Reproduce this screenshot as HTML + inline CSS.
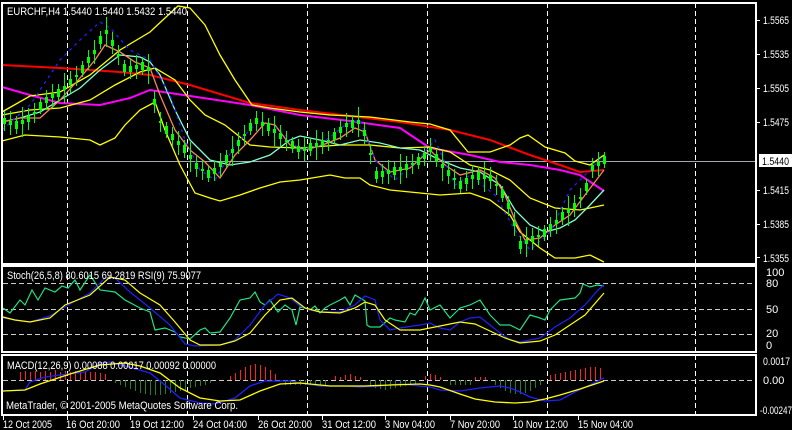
<!DOCTYPE html>
<html><head><meta charset="utf-8"><style>
html,body{margin:0;padding:0;background:#000;width:792px;height:430px;overflow:hidden}
svg{display:block}
text{font-family:"Liberation Sans",sans-serif;font-size:11px;fill:#fff}
</style></head><body>
<svg width="792" height="430" viewBox="0 0 792 430" xmlns="http://www.w3.org/2000/svg">
<rect width="792" height="430" fill="#000"/>
<g stroke="#fff" stroke-dasharray="5,3" stroke-width="1">
<line x1="67.5" y1="3" x2="67.5" y2="415"/><line x1="187.5" y1="3" x2="187.5" y2="415"/><line x1="307.5" y1="3" x2="307.5" y2="415"/><line x1="427.5" y1="3" x2="427.5" y2="415"/><line x1="547.5" y1="3" x2="547.5" y2="415"/><line x1="695.5" y1="3" x2="695.5" y2="415"/>
</g>
<line x1="3" y1="161.5" x2="756" y2="161.5" stroke="#a0a8b0"/>
<g stroke="#ccc" stroke-dasharray="5,3">
<line x1="3" y1="283.5" x2="756" y2="283.5"/><line x1="3" y1="309.5" x2="756" y2="309.5"/><line x1="3" y1="334.5" x2="756" y2="334.5"/><line x1="3" y1="380.5" x2="756" y2="380.5"/>
</g>
<g fill="none" stroke-width="1">
<path stroke="#ff2020" d="M20.5 380V372M25.5 380V371M30.5 380V372M35.5 380V371M40.5 380V372M45.5 380V371M50.5 380V372M55.5 380V370M60.5 380V372M65.5 380V371M70.5 380V372M75.5 380V371M80.5 380V372M85.5 380V371M90.5 380V372M95.5 380V372M100.5 380V373M105.5 380V374M230.5 380V376M235.5 380V373M240.5 380V370M245.5 380V367M250.5 380V365M255.5 380V364M260.5 380V365M265.5 380V367M270.5 380V370M275.5 380V374M335.5 380V376M340.5 380V377M345.5 380V375M350.5 380V374M355.5 380V376M360.5 380V377M425.5 380V376M430.5 380V374M435.5 380V375M440.5 380V377M475.5 380V377M480.5 380V377M485.5 380V377M550.5 380V375M555.5 380V374M560.5 380V373M565.5 380V372M570.5 380V371M575.5 380V370M580.5 380V369M585.5 380V368M590.5 380V367M595.5 380V367M600.5 380V368"/>
<path stroke="#208020" d="M115.5 380V383M120.5 380V385M125.5 380V387M130.5 380V389M135.5 380V391M140.5 380V393M145.5 380V394M150.5 380V395M155.5 380V395M160.5 380V395M165.5 380V394M170.5 380V393M175.5 380V392M180.5 380V391M185.5 380V390M190.5 380V388M195.5 380V387M200.5 380V386M205.5 380V385M210.5 380V383M285.5 380V385M290.5 380V385M295.5 380V385M300.5 380V385M305.5 380V385M310.5 380V385M315.5 380V385M320.5 380V385M325.5 380V385M370.5 380V386M375.5 380V388M380.5 380V389M385.5 380V390M390.5 380V389M395.5 380V388M400.5 380V387M405.5 380V386M410.5 380V385M415.5 380V384M450.5 380V385M455.5 380V385M460.5 380V385M465.5 380V385M470.5 380V385M495.5 380V385M500.5 380V388M505.5 380V391M510.5 380V393M515.5 380V394M520.5 380V394M525.5 380V393M530.5 380V391M535.5 380V388M540.5 380V385"/>
</g>
<g fill="none" stroke-width="1.3">
<polyline stroke="#ff0000" stroke-width="2" points="2,65 60,68 120,72 150,75 190,85 250,103 300,110 350,116 400,122 450,130 490,140 530,155 560,165 580,172 604,170"/>
<polyline stroke="#ff00ff" stroke-width="2" points="2,87 30,95 60,103 100,105 130,98 150,90 190,96 250,105 300,115 350,121 400,128 430,148 470,155 500,162 530,165 560,170 580,175 604,191"/>
<polyline stroke="#ffff00" points="2,112 30,96 60,92 90,75 120,50 150,32 165,18 178,6 190,8 205,25 220,55 235,80 252,105 270,108 300,112 330,115 370,117 410,122 430,124 450,130 468,152 490,152 510,145 520,138 528,135 545,147 565,153 575,161 590,165 604,155"/>
<polyline stroke="#ffff00" points="2,141 25,135 60,137 90,140 100,145 115,138 125,125 140,110 155,102 165,130 180,165 195,193 210,198 220,201 240,195 260,188 280,182 300,180 330,175 345,178 360,178 370,185 390,190 420,193 440,195 470,193 490,200 510,215 520,232 540,248 555,258 575,258 590,255 604,262"/>
<polyline stroke="#ffff00" points="2,115 30,110 60,108 90,100 115,85 140,72 155,68 175,80 190,100 205,115 225,125 250,145 270,147 300,148 340,145 370,145 400,148 430,147 450,152 470,165 490,170 510,180 530,198 555,208 580,210 590,208 604,205"/>
<polyline stroke="#80ffd0" points="2,122 20,118 40,112 60,100 80,88 100,70 120,55 140,57 150,62 160,75 175,110 190,140 210,160 230,165 250,162 270,155 290,140 300,136 320,140 340,145 360,140 380,143 400,148 420,150 440,160 460,168 480,172 500,185 515,210 530,225 545,232 560,228 575,220 590,205 604,190"/>
<polyline stroke="#ff8060" points="2,122 20,118 40,118 60,100 80,78 95,60 105,45 120,52 135,62 150,68 160,95 175,130 190,150 205,162 220,178 235,155 250,140 265,123 275,125 290,145 305,150 320,146 340,138 355,128 365,132 375,160 390,172 410,168 430,150 445,165 460,175 480,170 495,178 505,195 515,220 525,240 540,238 555,225 570,215 585,195 604,170"/>
<polyline stroke="#2020ff" stroke-dasharray="3,4" points="2,130 30,105 60,60 80,40 100,22 110,28 130,50 150,60 170,95 185,140 200,170 215,180 235,145 260,120 280,130 300,150 320,145 345,125 360,120 375,160 395,180 420,158 435,140 455,185 470,175 495,195 515,230 530,250 550,232 570,190 590,170 604,155"/>
</g>
<path fill="none" stroke="#00ff00" stroke-width="1" d="M4.5 111V131M10.5 111V135M16.5 116V134M22.5 107V137M28.5 108V130M34.5 103V123M40.5 98V114M46.5 90V110M52.5 84V108M58.5 84V102M64.5 73V103M70.5 71V93M76.5 66V86M82.5 61V77M88.5 50V70M94.5 40V64M100.5 31V49M106.5 17V47M112.5 32V54M118.5 45V65M124.5 60V76M130.5 59V79M136.5 55V79M142.5 57V75M148.5 54V84M154.5 91V113M160.5 112V132M166.5 122V138M172.5 127V147M178.5 131V155M184.5 140V158M190.5 142V172M196.5 155V177M202.5 160V180M208.5 166V182M214.5 161V181M220.5 153V177M226.5 150V168M232.5 136V166M238.5 132V154M244.5 125V145M250.5 119V135M256.5 111V131M262.5 112V136M268.5 118V136M274.5 116V146M280.5 125V147M286.5 131V151M292.5 137V153M298.5 139V159M304.5 137V161M310.5 138V156M316.5 130V160M322.5 132V154M328.5 131V151M334.5 128V144M340.5 120V140M346.5 113V137M352.5 115V133M358.5 107V137M364.5 122V144M370.5 144V164M376.5 167V183M382.5 164V184M388.5 160V184M394.5 162V180M400.5 154V184M406.5 156V178M412.5 154V174M418.5 153V169M424.5 146V166M430.5 138V162M436.5 149V167M442.5 151V181M448.5 162V184M454.5 169V189M460.5 177V193M466.5 171V191M472.5 165V189M478.5 167V185M484.5 162V192M490.5 167V189M496.5 175V195M502.5 186V202M508.5 196V216M514.5 212V236M520.5 236V254M526.5 227V257M532.5 228V250M538.5 226V246M544.5 225V241M550.5 217V237M556.5 210V234M562.5 207V225M568.5 196V226M574.5 195V217M580.5 188V208M586.5 179V195M592.5 158V178M598.5 152V176M604.5 152V168"/>
<path fill="none" stroke="#00ff00" stroke-width="3" d="M4.5 118V124M10.5 121V125M16.5 121V129M22.5 120V124M28.5 116V122M34.5 112V114M40.5 102V110M46.5 97V103M52.5 94V98M58.5 89V97M64.5 86V90M70.5 79V85M76.5 75V77M82.5 65V73M88.5 57V63M94.5 50V54M100.5 36V44M106.5 30V34M112.5 40V46M118.5 54V56M124.5 64V72M130.5 66V72M136.5 65V69M142.5 62V70M148.5 67V71M154.5 99V105M160.5 121V123M166.5 126V134M172.5 134V140M178.5 141V145M184.5 145V153M190.5 155V159M196.5 163V169M202.5 169V171M208.5 170V178M214.5 168V174M220.5 163V167M226.5 155V163M232.5 149V153M238.5 140V146M244.5 134V136M250.5 123V131M256.5 118V124M262.5 122V126M268.5 123V131M274.5 129V133M280.5 133V139M286.5 140V142M292.5 141V149M298.5 146V152M304.5 147V151M310.5 143V151M316.5 143V147M322.5 140V146M328.5 140V142M334.5 132V140M340.5 127V133M346.5 123V127M352.5 120V128M358.5 120V124M364.5 130V136M370.5 153V155M376.5 171V179M382.5 171V177M388.5 170V174M394.5 167V175M400.5 167V171M406.5 164V170M412.5 163V165M418.5 157V165M424.5 153V159M430.5 148V152M436.5 154V162M442.5 164V168M448.5 170V176M454.5 178V180M460.5 181V189M466.5 178V184M472.5 175V179M478.5 172V180M484.5 175V179M490.5 175V181M496.5 184V186M502.5 190V198M508.5 203V209M514.5 222V226M520.5 241V249M526.5 240V244M532.5 236V242M538.5 235V237M544.5 229V237M550.5 224V230M556.5 220V224M562.5 212V220M568.5 209V213M574.5 203V209M580.5 197V199M586.5 183V191M592.5 165V171M598.5 162V166M604.5 156V164"/>
<g fill="none" stroke-width="1.2">
<polyline stroke="#20e080" points="3,308 10,313 20,300 25,305 32,290 38,300 45,288 55,292 62,286 68,288 75,280 80,290 90,275 100,290 115,292 125,300 140,308 150,312 155,330 165,328 175,332 180,337 190,339 200,330 205,328 210,333 220,332 230,318 240,300 250,298 255,292 260,302 265,305 270,300 278,312 285,305 292,310 296,325 300,307 305,308 310,310 315,306 320,313 325,308 330,305 340,300 345,297 350,305 355,295 365,301 367,325 370,327 380,327 390,318 395,320 405,322 410,313 415,315 420,308 425,298 430,310 440,305 450,318 460,308 470,305 480,300 490,315 500,325 510,325 520,330 530,315 540,318 545,320 550,310 560,300 575,298 580,293 583,284 590,287 597,285 604,286"/>
<polyline stroke="#2020ff" points="3,318 15,320 30,322 50,316 70,304 90,293 105,278 115,278 130,292 150,308 170,325 185,344 195,346 220,345 235,340 250,325 265,305 278,294 290,298 300,306 310,310 320,312 340,312 355,305 365,296 375,300 380,320 390,330 400,328 420,325 430,323 440,328 450,330 460,322 470,318 480,317 490,325 500,333 510,340 520,342 530,340 540,338 555,327 570,318 585,305 598,290 604,285"/>
<polyline stroke="#ffff00" points="3,317 15,320 30,322 50,318 65,305 90,295 110,277 125,280 140,293 160,305 175,322 190,340 200,345 220,345 235,341 250,333 265,315 280,300 292,298 305,308 320,312 340,313 355,308 365,302 375,305 385,320 400,330 420,330 440,326 450,324 460,322 475,324 490,331 505,338 520,343 540,341 555,335 570,325 585,315 604,293"/>
</g>
<g fill="none" stroke-width="1.3">
<polyline stroke="#2020ff" points="3,391 25,390 30,382 45,377 60,375 85,372 100,363 110,362 125,366 150,373 165,385 180,398 200,403 215,404 235,398 250,386 265,381 290,381 300,383 320,386 345,386 360,387 380,386 400,384 430,387 440,390 460,391 480,388 500,386 510,388 520,392 530,397 545,401 560,400 575,392 590,385 604,378"/>
<polyline stroke="#ffff00" points="3,391 25,390 40,384 70,374 100,365 125,363 140,366 160,373 180,388 200,398 220,401 240,400 260,391 280,384 300,383 330,386 365,386 390,385 420,384 430,385 440,387 460,394 475,399 495,402 515,403 530,402 545,399 560,395 580,389 604,381"/>
</g>
<g fill="none" stroke="#fff" stroke-width="2">
<rect x="2" y="3" width="754" height="261"/>
<rect x="2" y="266" width="754" height="86"/>
<rect x="2" y="355" width="754" height="60"/>
</g>
<g stroke="#fff">
<line x1="757" y1="20.5" x2="760" y2="20.5"/><line x1="757" y1="54.5" x2="760" y2="54.5"/><line x1="757" y1="88.5" x2="760" y2="88.5"/><line x1="757" y1="122.5" x2="760" y2="122.5"/><line x1="757" y1="190.5" x2="760" y2="190.5"/><line x1="757" y1="224.5" x2="760" y2="224.5"/><line x1="757" y1="257.5" x2="760" y2="257.5"/>
<line x1="3.5" y1="415" x2="3.5" y2="420"/><line x1="67.5" y1="415" x2="67.5" y2="420"/><line x1="130.5" y1="415" x2="130.5" y2="420"/><line x1="193.5" y1="415" x2="193.5" y2="420"/><line x1="258.5" y1="415" x2="258.5" y2="420"/><line x1="322.5" y1="415" x2="322.5" y2="420"/><line x1="385.5" y1="415" x2="385.5" y2="420"/><line x1="450.5" y1="415" x2="450.5" y2="420"/><line x1="513.5" y1="415" x2="513.5" y2="420"/><line x1="578.5" y1="415" x2="578.5" y2="420"/>
</g>
<text x="7" y="15" textLength="180" lengthAdjust="spacingAndGlyphs">EURCHF,H4  1.5440 1.5440 1.5432 1.5440</text>
<text x="7" y="279" textLength="194" lengthAdjust="spacingAndGlyphs">Stoch(26,5,8) 80.6015 69.2819  RSI(9) 75.9077</text>
<text x="7" y="369" textLength="209" lengthAdjust="spacingAndGlyphs">MACD(12,26,9) 0.00088 0.00017 0.00092 0.00000</text>
<text x="6" y="409" textLength="232" lengthAdjust="spacingAndGlyphs">MetaTrader, © 2001-2005 MetaQuotes Software Corp.</text>
<g>
<text x="763" y="24" textLength="26" lengthAdjust="spacingAndGlyphs">1.5565</text><text x="763" y="58" textLength="26" lengthAdjust="spacingAndGlyphs">1.5535</text><text x="763" y="92" textLength="26" lengthAdjust="spacingAndGlyphs">1.5505</text><text x="763" y="126" textLength="26" lengthAdjust="spacingAndGlyphs">1.5475</text>
<rect x="759" y="154" width="33" height="13" fill="#fff"/><text x="762" y="165" style="fill:#000" textLength="27" lengthAdjust="spacingAndGlyphs">1.5440</text>
<text x="763" y="194" textLength="26" lengthAdjust="spacingAndGlyphs">1.5415</text><text x="763" y="228" textLength="26" lengthAdjust="spacingAndGlyphs">1.5385</text><text x="763" y="262" textLength="26" lengthAdjust="spacingAndGlyphs">1.5355</text>
<text x="766" y="276">100</text><text x="766" y="287">80</text><text x="766" y="313">50</text><text x="766" y="337">20</text><text x="766" y="349">0</text>
<text x="763" y="365" textLength="27" lengthAdjust="spacingAndGlyphs">0.0017</text><text x="763" y="384">0.00</text><text x="760" y="414" textLength="32" lengthAdjust="spacingAndGlyphs">-0.00247</text>
<text x="3" y="428" textLength="49" lengthAdjust="spacingAndGlyphs">12 Oct 2005</text><text x="66" y="428" textLength="54" lengthAdjust="spacingAndGlyphs">16 Oct 20:00</text><text x="130" y="428" textLength="54" lengthAdjust="spacingAndGlyphs">19 Oct 12:00</text><text x="193" y="428" textLength="54" lengthAdjust="spacingAndGlyphs">24 Oct 04:00</text><text x="258" y="428" textLength="54" lengthAdjust="spacingAndGlyphs">26 Oct 20:00</text><text x="322" y="428" textLength="54" lengthAdjust="spacingAndGlyphs">31 Oct 12:00</text><text x="385" y="428" textLength="50" lengthAdjust="spacingAndGlyphs">3 Nov 04:00</text><text x="450" y="428" textLength="50" lengthAdjust="spacingAndGlyphs">7 Nov 20:00</text><text x="513" y="428" textLength="55" lengthAdjust="spacingAndGlyphs">10 Nov 12:00</text><text x="578" y="428" textLength="55" lengthAdjust="spacingAndGlyphs">15 Nov 04:00</text>
</g>
</svg>
</body></html>
